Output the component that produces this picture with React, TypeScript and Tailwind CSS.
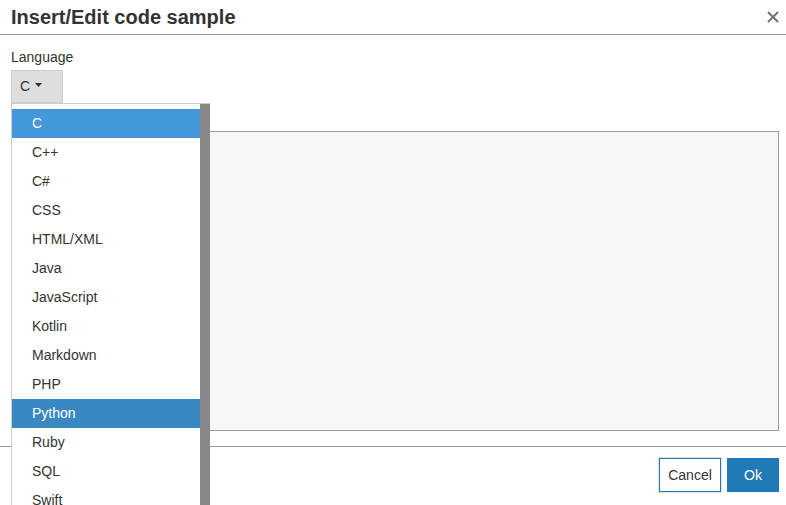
import React from 'react';

const languages = ['C', 'C++', 'C#', 'CSS', 'HTML/XML', 'Java', 'JavaScript', 'Kotlin', 'Markdown', 'PHP', 'Python', 'Ruby', 'SQL', 'Swift'];

export default function App() {
  return (
    <div className="relative w-[786px] h-[505px] overflow-hidden bg-white text-[#333] font-['Liberation_Sans',Arial,sans-serif]">
      <div className="flex h-[35px] items-center justify-between border-b border-[#999] pl-[11px] pr-[6px]">
        <h1 className="text-[20px] font-bold leading-6 text-[#333]">Insert/Edit code sample</h1>
        <svg width="14" height="14" viewBox="0 0 14 14" className="text-[#777]">
          <path d="M2 2 L12 12 M12 2 L2 12" stroke="currentColor" strokeWidth="2.2" />
        </svg>
      </div>

      <div className="pl-[11px] pr-[7px] pt-[13px]">
        <div className="text-[14px] leading-[18px]">Language</div>
        <button className="mt-[4px] flex h-[33px] w-[52px] items-center gap-[5px] border border-[#ccc] bg-[#dedede] pl-[8px] text-[14px]">
          C
          <svg width="7" height="4" viewBox="0 0 7 4" className="mb-[3px]">
            <path d="M0 0 H7 L3.5 4 Z" fill="#333" />
          </svg>
        </button>
        <div className="mt-[28px] h-[300px] border border-[#9a9a9a] bg-[#f7f7f7]" />
      </div>

      <div className="mt-[15px] flex justify-end gap-[6px] border-t border-[#999] pr-[7px] pt-[11px]">
        <button className="h-[34px] w-[62px] border border-[#2276bb] bg-white text-[14px] text-[#333] ring-1 ring-[#e4e4e4]">
          Cancel
        </button>
        <button className="h-[34px] w-[52px] bg-[#207ab7] text-[14px] text-white">Ok</button>
      </div>

      <div className="absolute left-[11px] top-[103px] bottom-0 flex w-[199px] border-l border-t border-[#ccc] bg-white">
        <ul className="flex-1 pt-[5px]">
          {languages.map((lang) => (
            <li
              key={lang}
              className={
                'flex h-[29px] items-center pl-[20px] text-[14px] ' +
                (lang === 'C' ? 'bg-[#4298d8] text-white' : lang === 'Python' ? 'bg-[#3a88c2] text-white' : 'text-[#333]')
              }
            >
              {lang}
            </li>
          ))}
        </ul>
        <div className="w-[10px] bg-[#888]" />
      </div>
    </div>
  );
}
